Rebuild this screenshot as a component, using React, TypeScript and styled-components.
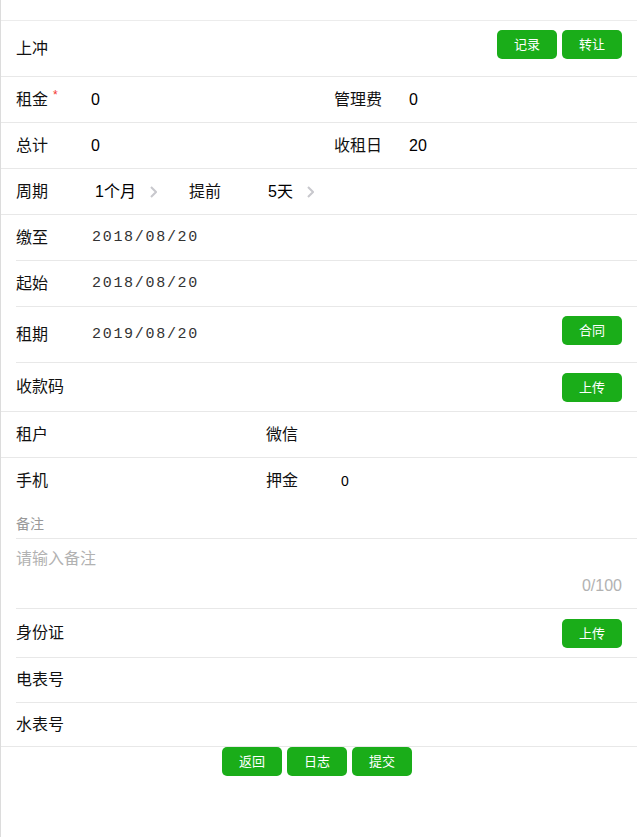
import React from "react";
import styled, { createGlobalStyle } from "styled-components";

const GlobalStyle = createGlobalStyle`
  html, body { margin: 0; padding: 0; background: #fff; }
  body {
    font-family: "Liberation Sans", "Noto Sans CJK SC", sans-serif;
    font-size: 16px;
    color: #000;
  }
  * { box-sizing: border-box; }
`;

const Page = styled.div`
  min-height: 100vh;
  border-left: 1px solid #dcdcdc;
  background: #fff;
`;

const TopGap = styled.div`
  height: 21px;
  border-bottom: 1px solid #ececec;
`;

const Row = styled.div<{ $h: number; $inset?: boolean; $noBorder?: boolean; $split?: boolean }>`
  display: flex;
  align-items: center;
  height: ${(p) => p.$h + (p.$noBorder ? 0 : 1)}px;
  margin-left: ${(p) => (p.$inset ? "15px" : "0")};
  padding: ${(p) => (p.$split ? "0" : p.$inset ? "0 15px 0 0" : "0 15px")};
  border-bottom: ${(p) => (p.$noBorder ? "none" : "1px solid #e8e8e8")};
`;

const Cell = styled.div<{ $w?: number }>`
  display: flex;
  align-items: center;
  padding-left: 15px;
  ${(p) => (p.$w ? `width: ${p.$w}px; flex-shrink: 0;` : "flex: 1;")}
`;

const Label = styled.span<{ $w?: number }>`
  width: ${(p) => p.$w ?? 75}px;
  flex-shrink: 0;
  line-height: 22px;
  color: #111;
  white-space: nowrap;
`;

const Required = styled.span`
  color: #f43530;
  font-size: 12px;
  vertical-align: top;
  line-height: 12px;
  margin-left: 5px;
`;

const Value = styled.span<{ $size?: number }>`
  font-size: ${(p) => p.$size ?? 16}px;
  line-height: 22px;
  color: #000;
`;

const DateValue = styled.span`
  font-family: "Liberation Mono", monospace;
  font-size: 15px;
  letter-spacing: 1.7px;
  color: #333;
  margin-left: 1px;
`;

const Spacer = styled.div`
  flex: 1;
`;

const GreenButton = styled.button`
  width: 60px;
  height: 29px;
  padding: 0;
  border: none;
  border-radius: 5px;
  background: #1aad19;
  color: #fff;
  font-family: "Liberation Sans", "Noto Sans CJK SC", sans-serif;
  font-size: 13px;
  line-height: 29px;
  cursor: pointer;
`;

const ButtonGroup = styled.div<{ $top?: number }>`
  display: flex;
  gap: 5px;
  ${(p) => (p.$top !== undefined ? `align-self: flex-start; margin-top: ${p.$top}px;` : "")}
`;

const PickerGroup = styled.div`
  display: flex;
  align-items: center;
  width: 173px;
  flex-shrink: 0;
`;

const PickerValue = styled.span`
  display: flex;
  align-items: center;
  gap: 14px;
  line-height: 22px;
  margin-left: 4px;
`;

const PickerRow = styled(Row)`
  padding-left: 15px;
`;

const NoteLabel = styled.div`
  display: flex;
  align-items: flex-end;
  height: 36px;
  margin-left: 15px;
  padding-bottom: 4px;
  border-bottom: 1px solid #e8e8e8;
  font-size: 14px;
  line-height: 20px;
  color: #999;
`;

const NoteBox = styled.div`
  margin-left: 15px;
  padding: 9px 15px 11px 0;
  border-bottom: 1px solid #e8e8e8;
`;

const NoteInput = styled.textarea`
  display: block;
  width: 100%;
  height: 27px;
  padding: 0;
  border: none;
  outline: none;
  resize: none;
  font-family: "Liberation Sans", "Noto Sans CJK SC", sans-serif;
  font-size: 16px;
  line-height: 22px;
  color: #000;
  background: transparent;
  &::placeholder { color: #b2b2b2; }
`;

const Counter = styled.div`
  text-align: right;
  line-height: 22px;
  font-size: 16px;
  color: #b2b2b2;
`;

const Footer = styled.div`
  display: flex;
  justify-content: center;
  gap: 5px;
  padding-right: 4px;
`;

const Chevron = () => (
  <svg width="7" height="12" viewBox="0 0 7 12" aria-hidden="true">
    <polyline points="1,1 6,6 1,11" fill="none" stroke="#c8c8cd" strokeWidth="2" />
  </svg>
);

export default function App() {
  return (
    <>
      <GlobalStyle />
      <Page>
        <TopGap />
        <Row $h={55}>
          <Label>上冲</Label>
          <Spacer />
          <ButtonGroup $top={9}>
            <GreenButton>记录</GreenButton>
            <GreenButton>转让</GreenButton>
          </ButtonGroup>
        </Row>
        <Row $h={45} $split>
          <Cell>
            <Label>
              租金<Required>*</Required>
            </Label>
            <Value>0</Value>
          </Cell>
          <Cell>
            <Label>管理费</Label>
            <Value>0</Value>
          </Cell>
        </Row>
        <Row $h={45} $split>
          <Cell>
            <Label>总计</Label>
            <Value>0</Value>
          </Cell>
          <Cell>
            <Label>收租日</Label>
            <Value>20</Value>
          </Cell>
        </Row>
        <PickerRow $h={45}>
          <PickerGroup>
            <Label>周期</Label>
            <PickerValue>
              1个月 <Chevron />
            </PickerValue>
          </PickerGroup>
          <PickerGroup>
            <Label>提前</Label>
            <PickerValue>
              5天 <Chevron />
            </PickerValue>
          </PickerGroup>
        </PickerRow>
        <Row $h={45} $inset>
          <Label>缴至</Label>
          <DateValue>2018/08/20</DateValue>
        </Row>
        <Row $h={45} $inset>
          <Label>起始</Label>
          <DateValue>2018/08/20</DateValue>
        </Row>
        <Row $h={55} $inset>
          <Label>租期</Label>
          <DateValue>2019/08/20</DateValue>
          <Spacer />
          <ButtonGroup $top={9}>
            <GreenButton>合同</GreenButton>
          </ButtonGroup>
        </Row>
        <Row $h={48}>
          <Label>收款码</Label>
          <Spacer />
          <GreenButton>上传</GreenButton>
        </Row>
        <Row $h={45} $split>
          <Cell $w={250}>
            <Label>租户</Label>
          </Cell>
          <Cell>
            <Label>微信</Label>
          </Cell>
        </Row>
        <Row $h={45} $split $noBorder>
          <Cell $w={250}>
            <Label>手机</Label>
          </Cell>
          <Cell>
            <Label>押金</Label>
            <Value $size={14}>0</Value>
          </Cell>
        </Row>
        <NoteLabel>备注</NoteLabel>
        <NoteBox>
          <NoteInput placeholder="请输入备注" />
          <Counter>0/100</Counter>
        </NoteBox>
        <Row $h={48} $inset>
          <Label>身份证</Label>
          <Spacer />
          <GreenButton>上传</GreenButton>
        </Row>
        <Row $h={44} $inset>
          <Label>电表号</Label>
        </Row>
        <Row $h={43}>
          <Label>水表号</Label>
        </Row>
        <Footer>
          <GreenButton>返回</GreenButton>
          <GreenButton>日志</GreenButton>
          <GreenButton>提交</GreenButton>
        </Footer>
      </Page>
    </>
  );
}
